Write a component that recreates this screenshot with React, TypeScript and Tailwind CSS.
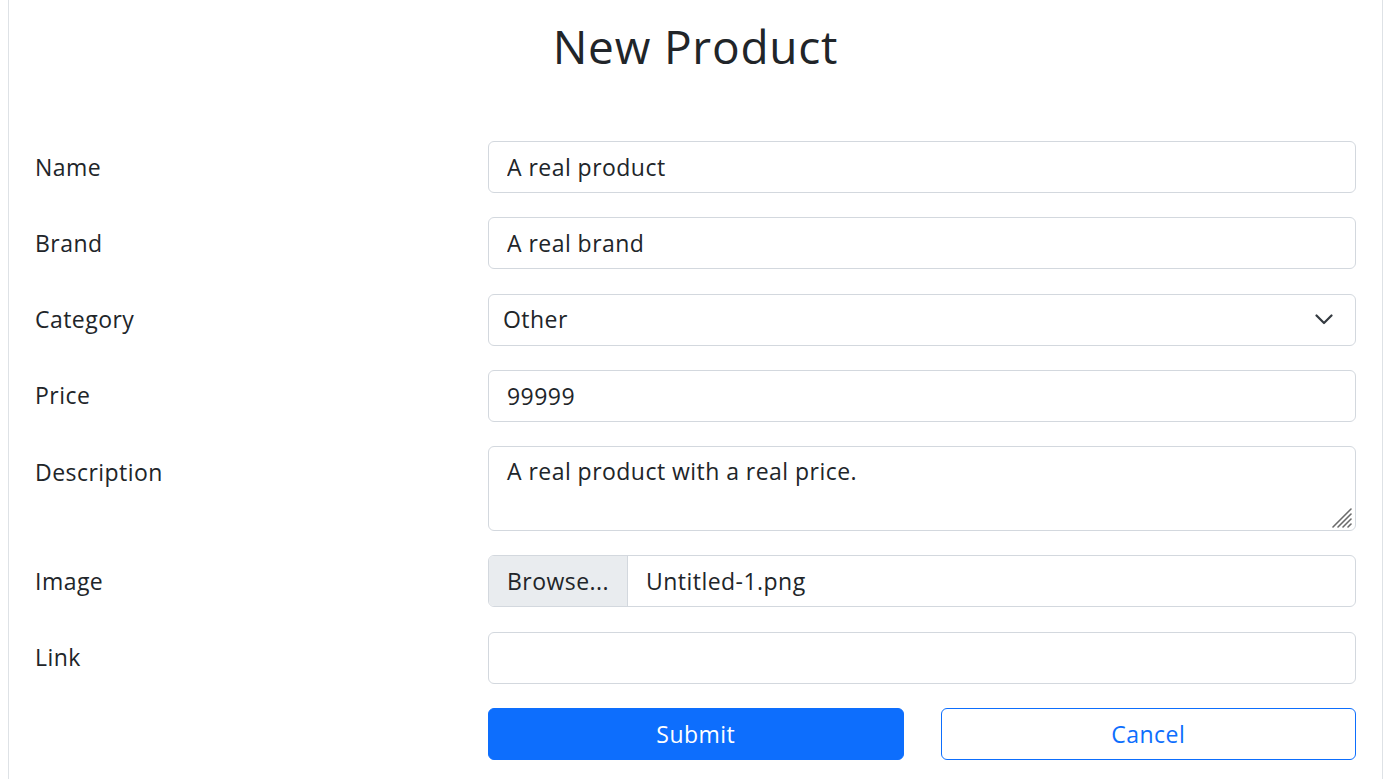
import React from "react";

const font = { fontFamily: '"Open Sans", "Noto Sans", sans-serif' };

function Label({ children }: { children: React.ReactNode }) {
  return (
    <label className="block text-[23px] leading-[33px] tracking-[0.02em] text-[#212529] pt-[9.6px]">
      {children}
    </label>
  );
}

const inputCls =
  "block w-full h-[52px] rounded-[6px] border border-[#d3d8de] bg-white px-[18px] text-[23px] leading-[33px] tracking-[0.02em] text-[#212529] outline-none";

export default function App() {
  return (
    <div className="min-h-screen bg-white" style={font}>
      <div className="ml-[8px] w-[1375px] min-h-[779px] border-x border-[#dee2e6] px-[26px]">
        <h2 className="pt-[20px] text-center text-[46px] leading-[53px] tracking-[0.017em] font-normal text-[#212529]">
          New Product
        </h2>
        <form className="mt-[68px] grid grid-cols-[453px_1fr] gap-y-[24.3px]">
          <Label>Name</Label>
          <input className={inputCls} defaultValue="A real product" />

          <Label>Brand</Label>
          <input className={inputCls} defaultValue="A real brand" />

          <Label>Category</Label>
          <div className="relative flex h-[52px] items-center rounded-[6px] border border-[#d3d8de] bg-white pl-[14px] pr-[18px] text-[23px] leading-[33px] tracking-[0.02em] text-[#212529]">
            <span className="flex-1">Other</span>
            <svg width="18" height="11" viewBox="0 0 18 11" className="mr-[4px]">
              <path d="M1.5 1.5 L9 9 L16.5 1.5" fill="none" stroke="#343a40" strokeWidth="2.2" strokeLinecap="round" strokeLinejoin="round" />
            </svg>
          </div>

          <Label>Price</Label>
          <input className={inputCls} defaultValue="99999" />

          <Label>Description</Label>
          <div className="relative">
            <textarea
              className="block w-full h-[85px] rounded-[6px] border border-[#d3d8de] bg-white px-[18px] py-[8px] text-[23px] leading-[33px] tracking-[0.02em] text-[#212529] outline-none resize-none"
              defaultValue="A real product with a real price."
            />
            <svg width="24" height="22" viewBox="0 0 24 22" className="absolute right-[2px] bottom-[2px]">
              <g stroke="#6b6b6b" strokeWidth="1.6" strokeLinecap="round">
                <line x1="3" y1="20" x2="21" y2="2" />
                <line x1="8" y1="20" x2="21" y2="7" />
                <line x1="13" y1="20" x2="21" y2="12" />
                <line x1="18" y1="20" x2="21" y2="17" />
              </g>
            </svg>
          </div>

          <Label>Image</Label>
          <div className="flex h-[52px] overflow-hidden rounded-[6px] border border-[#d3d8de] bg-white text-[23px] leading-[33px] tracking-[0.02em] text-[#212529]">
            <div className="flex items-center bg-[#e9ecef] border-r border-[#d3d8de] px-[18px]">Browse...</div>
            <div className="flex items-center px-[18px]">Untitled-1.png</div>
          </div>

          <Label>Link</Label>
          <input className={inputCls} defaultValue="" />

          <div />
          <div className="grid grid-cols-2 gap-x-[37px]">
            <button type="button" className="h-[52px] rounded-[6px] bg-[#0d6efd] text-[23px] leading-[33px] tracking-[0.02em] text-white border border-[#0d6efd]">
              Submit
            </button>
            <button type="button" className="h-[52px] rounded-[6px] bg-white text-[23px] leading-[33px] tracking-[0.02em] text-[#0d6efd] border border-[#0d6efd]">
              Cancel
            </button>
          </div>
        </form>
      </div>
    </div>
  );
}
